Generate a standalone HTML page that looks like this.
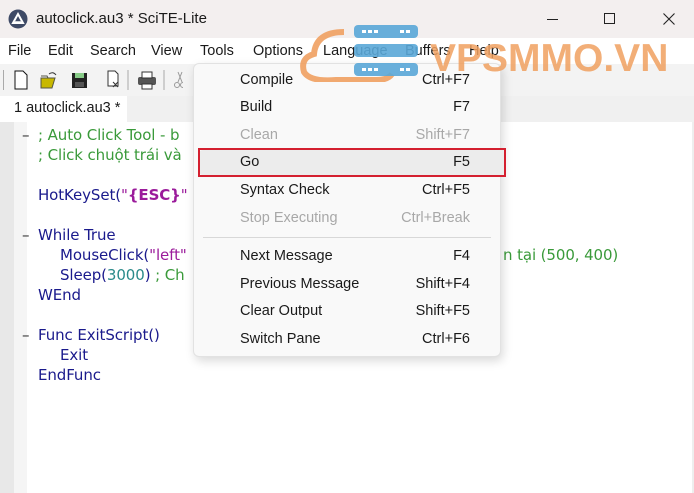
<!DOCTYPE html>
<html><head><meta charset="utf-8"><style>
*{margin:0;padding:0;box-sizing:border-box}
body{width:694px;height:493px;overflow:hidden;position:relative;background:#fff;font-family:"Liberation Sans","DejaVu Sans",sans-serif;}
.a{position:absolute;white-space:nowrap}
.code{font-family:"DejaVu Sans",sans-serif;font-size:15px;letter-spacing:-0.1px;color:#1a1a8c}
.cm{color:#3a9a3a}.st{color:#9b1b9b}.nm{color:#2a8a8a}.bk{color:#222}
.mi{position:absolute;left:240px;font-size:14.5px;color:#1a1a1a}
.sc{position:absolute;right:224px;font-size:14.5px;color:#1a1a1a}
.dis{color:#a8a8a8}
.mb{position:absolute;top:43px;font-size:14.5px;color:#1a1a1a}
</style></head><body>
<div class="a" style="left:0;top:0;width:694px;height:38px;background:#f3efef"></div>
<svg class="a" style="left:8px;top:9px" width="20" height="20" viewBox="0 0 20 20"><circle cx="10" cy="10" r="9.5" fill="#3e4a66"/><path d="M5 14 L10 5 L15 14 Z" fill="none" stroke="#fff" stroke-width="2"/><path d="M7 13 H13" stroke="#fff" stroke-width="1.5"/></svg>
<div class="a" style="left:36px;top:10px;font-size:15px;color:#1a1a1a">autoclick.au3 * SciTE-Lite</div>
<div class="a" style="left:547px;top:19px;width:11px;height:1px;background:#222"></div>
<div class="a" style="left:604px;top:13px;width:11px;height:11px;border:1px solid #222"></div>
<svg class="a" style="left:663px;top:13px" width="12" height="12"><path d="M0.5 0.5L11.5 11.5M11.5 0.5L0.5 11.5" stroke="#222" stroke-width="1.1"/></svg>
<div class="a" style="left:0;top:38px;width:694px;height:26px;background:#fff"></div>
<div class="mb" style="left:8px">File</div><div class="mb" style="left:48px">Edit</div><div class="mb" style="left:90px">Search</div><div class="mb" style="left:151px">View</div><div class="mb" style="left:200px">Tools</div><div class="mb" style="left:253px">Options</div><div class="mb" style="left:323px">Language</div><div class="mb" style="left:405px">Buffers</div><div class="mb" style="left:469px">Help</div>
<div class="a" style="left:0;top:64px;width:694px;height:32px;background:#f3f3f3"></div>
<div class="a" style="left:3px;top:70px;width:1px;height:20px;background:#aaa"></div>
<svg class="a" style="left:13px;top:70px" width="170" height="22">
<path d="M2 1h8l4 4v14H2z" fill="#fff" stroke="#111"/>
<path d="M28 8h14l-3 10H28z" fill="#c8b800" stroke="#554"/><path d="M28 6h6l1 2" stroke="#554" fill="none"/><path d="M36 4 q4-3 7 1" stroke="#333" fill="none"/>
<rect x="59" y="3" width="15" height="15" fill="#222"/><rect x="62" y="3" width="9" height="5" fill="#8c8"/><rect x="62" y="12" width="9" height="5" fill="#555"/>
<path d="M95 1h7l3 3v12H95z" fill="#fff" stroke="#333"/><path d="M100 12l5 5M105 12l-5 5" stroke="#333"/>
<line x1="115" y1="0" x2="115" y2="20" stroke="#aaa"/>
<rect x="125" y="7" width="18" height="8" rx="2" fill="#555"/><rect x="129" y="2" width="10" height="6" fill="#fff" stroke="#333"/><rect x="129" y="14" width="10" height="5" fill="#fff" stroke="#333"/>
<line x1="151" y1="0" x2="151" y2="20" stroke="#aaa"/>
<path d="M165 2l4 10M169 2l-4 10" stroke="#999"/><circle cx="164" cy="15" r="2.5" fill="none" stroke="#999"/><circle cx="170" cy="15" r="2.5" fill="none" stroke="#999"/>
</svg>
<div class="a" style="left:0;top:96px;width:694px;height:26px;background:#f0f0f0"></div>
<div class="a" style="left:0;top:96px;width:127px;height:26px;background:#fff"></div>
<div class="a" style="left:14px;top:100px;font-size:14.5px;color:#1a1a1a">1 autoclick.au3 *</div>
<div class="a" style="left:0;top:122px;width:14px;height:371px;background:#e8e8e8"></div>
<div class="a" style="left:14px;top:122px;width:13px;height:371px;background:#f5f5f5"></div>
<div class="a" style="left:692px;top:122px;width:2px;height:371px;background:#eee"></div>
<div class="a code" style="left:22px;top:126px;color:#333">–</div>
<div class="a code" style="left:22px;top:226px;color:#333">–</div>
<div class="a code" style="left:22px;top:326px;color:#333">–</div>
<div class="a code cm" style="left:38px;top:126px">; Auto Click Tool - b</div>
<div class="a code cm" style="left:38px;top:146px">; Click chuột trái và</div>
<div class="a code" style="left:38px;top:186px">HotKeySet(<span class="st">"<b>{ESC}</b>"</span></div>
<div class="a code" style="left:38px;top:226px">While True</div>
<div class="a code" style="left:60px;top:246px">MouseClick(<span class="st">"left"</span></div>
<div class="a code" style="left:60px;top:266px">Sleep(<span class="nm">3000</span>) <span class="cm">; Ch</span></div>
<div class="a code" style="left:38px;top:286px">WEnd</div>
<div class="a code" style="left:38px;top:326px">Func ExitScript()</div>
<div class="a code" style="left:60px;top:346px">Exit</div>
<div class="a code" style="left:38px;top:366px">EndFunc</div>
<div class="a code cm" style="left:503px;top:246px">n tại (500, 400)</div>
<div class="a" style="left:193px;top:63px;width:308px;height:294px;background:#f9f9f9;border:1px solid #e2e2e2;border-radius:6px;box-shadow:2px 4px 10px rgba(0,0,0,0.15)"></div>
<div class="a" style="left:199px;top:150px;width:305px;height:25px;background:#ececec;border-radius:4px"></div>
<div class="a" style="left:198px;top:148px;width:308px;height:29px;border:2px solid #d42030"></div>
<div class="a" style="left:203px;top:237px;width:288px;height:1px;background:#d8d8d8"></div>
<div class="mi" style="top:72px">Compile</div><div class="sc" style="top:72px">Ctrl+F7</div>
<div class="mi" style="top:99px">Build</div><div class="sc" style="top:99px">F7</div>
<div class="mi dis" style="top:127px">Clean</div><div class="sc dis" style="top:127px">Shift+F7</div>
<div class="mi" style="top:154px">Go</div><div class="sc" style="top:154px">F5</div>
<div class="mi" style="top:182px">Syntax Check</div><div class="sc" style="top:182px">Ctrl+F5</div>
<div class="mi dis" style="top:210px">Stop Executing</div><div class="sc dis" style="top:210px">Ctrl+Break</div>
<div class="mi" style="top:248px">Next Message</div><div class="sc" style="top:248px">F4</div>
<div class="mi" style="top:276px">Previous Message</div><div class="sc" style="top:276px">Shift+F4</div>
<div class="mi" style="top:303px">Clear Output</div><div class="sc" style="top:303px">Shift+F5</div>
<div class="mi" style="top:331px">Switch Pane</div><div class="sc" style="top:331px">Ctrl+F6</div>
<svg class="a" style="left:296px;top:22px" width="140" height="60">
<path d="M48 10 Q20 10 18 32 Q4 36 8 50 Q14 60 40 58 L80 58 Q92 58 96 52" fill="none" stroke="#f0a060" stroke-width="6" opacity="0.9"/>
<g fill="#5aa8d8" opacity="0.9"><rect x="58" y="3" width="64" height="13" rx="4"/><rect x="58" y="22" width="64" height="13" rx="4"/><rect x="58" y="41" width="64" height="13" rx="4"/></g>
<g fill="#fff"><rect x="66" y="8" width="4" height="3"/><rect x="72" y="8" width="4" height="3"/><rect x="78" y="8" width="4" height="3"/><rect x="104" y="8" width="4" height="3"/><rect x="110" y="8" width="4" height="3"/><rect x="66" y="46" width="4" height="3"/><rect x="72" y="46" width="4" height="3"/><rect x="78" y="46" width="4" height="3"/><rect x="104" y="46" width="4" height="3"/><rect x="110" y="46" width="4" height="3"/></g>
</svg>
<div class="a" style="left:430px;top:37px;font-size:39px;font-weight:bold;color:#f0a060;opacity:0.85">VPSMMO.VN</div>
</body></html>
